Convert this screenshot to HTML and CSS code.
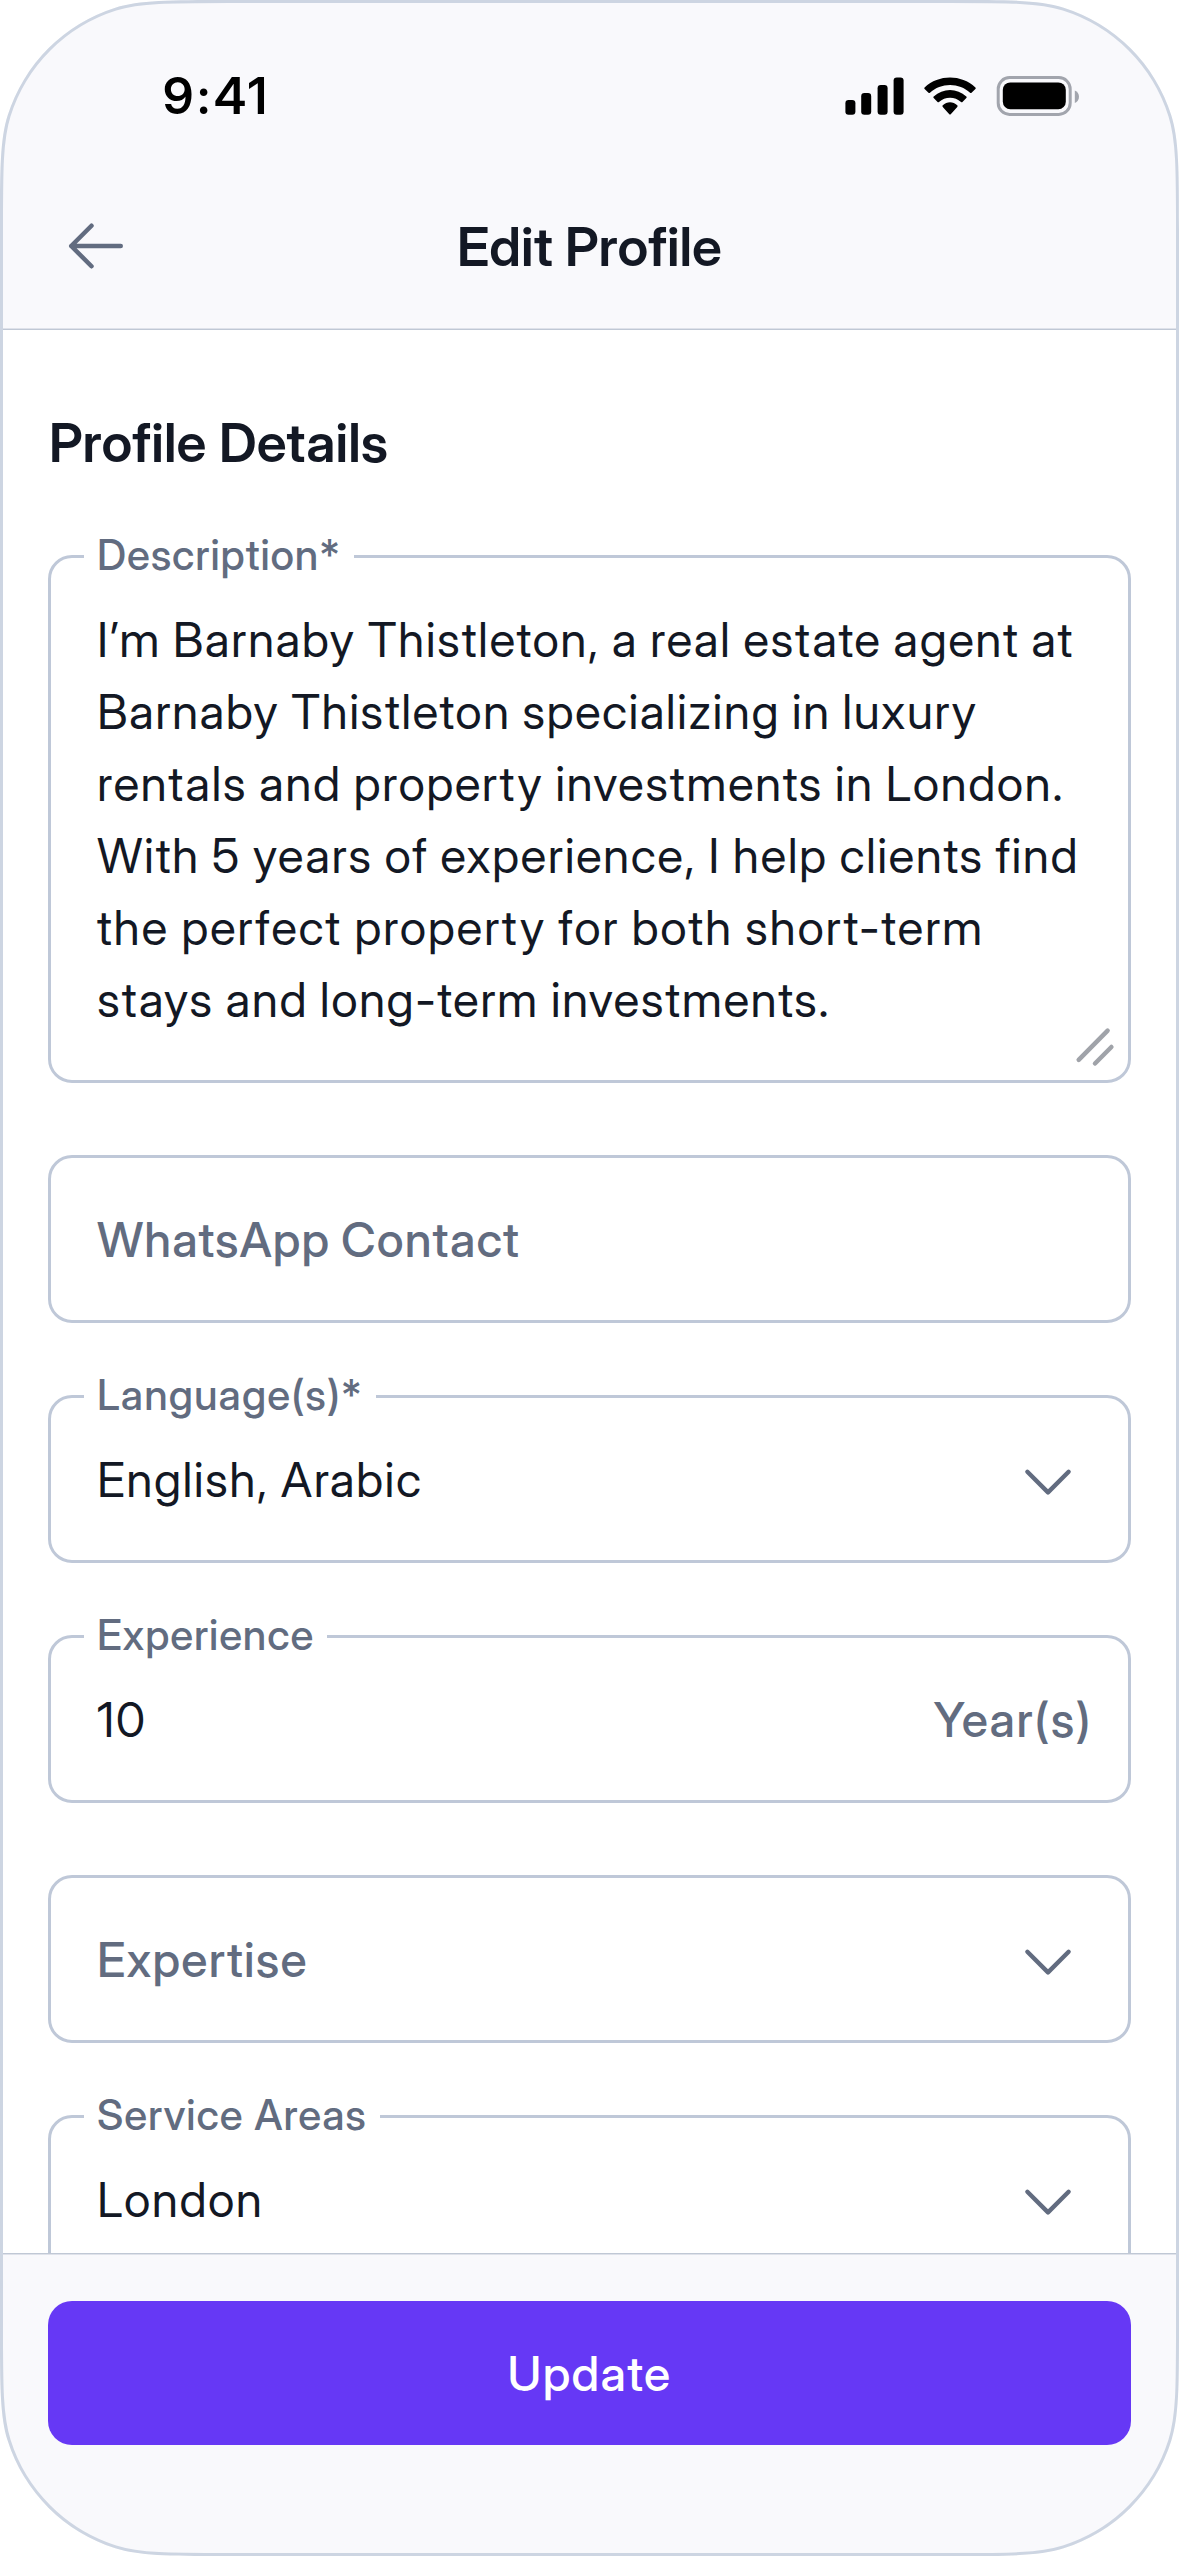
FILE: index.html
```html
<!DOCTYPE html>
<html lang="en">
<head>
<meta charset="utf-8">
<title>Edit Profile</title>
<link rel="stylesheet" href="styles.css">
</head>
<body>
<svg class="defs" width="0" height="0" aria-hidden="true">
  <symbol id="chevron" viewBox="0 0 256 256"><path d="M208 96l-80 80-80-80" fill="none" stroke="currentColor" stroke-width="17" stroke-linecap="round" stroke-linejoin="round"/></symbol>
</svg>
<div class="phone">
  <header class="header">
    <div class="status">
      <span class="time">9:41</span>
      <svg class="status-icons" width="236" height="42" viewBox="844 75 236 42" aria-hidden="true">
        <rect x="845.4" y="100" width="10" height="14.8" rx="3.2"/>
        <rect x="861.2" y="93" width="10" height="21.8" rx="3.2"/>
        <rect x="877.6" y="85" width="10" height="29.8" rx="3.2"/>
        <rect x="893.6" y="77.4" width="10" height="37.4" rx="3.2"/>
        <path transform="translate(924.3 77.6) scale(3)" d="M8.571 2.466C11.058 2.466 13.45 3.388 15.253 5.042C15.389 5.17 15.606 5.168 15.739 5.038L17.037 3.775C17.105 3.709 17.142 3.62 17.142 3.527C17.141 3.435 17.102 3.346 17.034 3.281C12.303 -1.094 4.839 -1.094 .108 3.281C.04 3.346 .001 3.435 0 3.527C-.001 3.62 .037 3.709 .105 3.775L1.403 5.038C1.536 5.168 1.753 5.17 1.889 5.042C3.692 3.388 6.084 2.466 8.571 2.466ZM8.568 6.687C9.925 6.686 11.234 7.198 12.24 8.122C12.376 8.253 12.591 8.251 12.723 8.116L14.011 6.797C14.078 6.728 14.116 6.634 14.115 6.536C14.114 6.439 14.075 6.346 14.005 6.278C10.942 3.387 6.197 3.387 3.133 6.278C3.064 6.346 3.024 6.439 3.023 6.536C3.023 6.634 3.06 6.728 3.128 6.797L4.415 8.116C4.548 8.251 4.762 8.253 4.898 8.122C5.904 7.199 7.212 6.687 8.568 6.687ZM11.092 9.48C11.094 9.585 11.057 9.687 10.99 9.761L8.813 12.216C8.749 12.288 8.662 12.328 8.572 12.328C8.481 12.328 8.394 12.288 8.33 12.216L6.153 9.761C6.086 9.687 6.049 9.585 6.051 9.48C6.053 9.375 6.094 9.275 6.164 9.204C7.554 7.891 9.589 7.891 10.98 9.204C11.05 9.275 11.09 9.375 11.092 9.48Z"/>
        <rect x="998.2" y="77.6" width="72" height="36.8" rx="11.4" fill="none" stroke="#a2a5ad" stroke-width="3"/>
        <rect x="1002.8" y="82.4" width="63" height="26.8" rx="7.5"/>
        <path d="M1074.8 90.6V103C1077.5 101.9 1079 99.5 1079 96.8C1079 94.1 1077.5 91.7 1074.8 90.6Z" fill="#a2a5ad"/>
      </svg>
    </div>
    <div class="nav">
      <svg class="back" viewBox="0 0 256 256" aria-label="Back"><path d="M216 128H40M112 56l-72 72 72 72" fill="none" stroke="currentColor" stroke-width="16" stroke-linecap="round" stroke-linejoin="round"/></svg>
      <h1 class="title">Edit Profile</h1>
    </div>
  </header>

  <main class="content">
    <h2 class="section-title">Profile Details</h2>
    <div class="fields">
      <div class="field field-area">
        <span class="label">Description*</span>
        <p class="value">I’m Barnaby Thistleton, a real estate agent at<br><span class="snug">Barnaby Thistleton specializing in luxury</span><br>rentals and property investments in London.<br>With 5 years of experience, I help clients find<br><span class="loose">the perfect property for both short-term</span><br>stays and long-term investments.</p>
        <svg class="grip" width="42" height="42" viewBox="1074 1026 42 42" aria-hidden="true"><path d="M1078.7 1059.8L1107.6 1030.6M1095 1063.5L1111.4 1047" fill="none" stroke="#a0a3a9" stroke-width="4.5" stroke-linecap="round"/></svg>
      </div>
      <div class="field"><span class="placeholder wide">WhatsApp Contact</span></div>
      <div class="field">
        <span class="label wide">Language(s)*</span>
        <span class="value">English, Arabic</span>
        <svg class="chevron" aria-hidden="true"><use href="#chevron"/></svg>
      </div>
      <div class="field">
        <span class="label">Experience</span>
        <span class="value">10</span>
        <span class="placeholder unit">Year(s)</span>
      </div>
      <div class="field">
        <span class="placeholder">Expertise</span>
        <svg class="chevron" aria-hidden="true"><use href="#chevron"/></svg>
      </div>
      <div class="field">
        <span class="label">Service Areas</span>
        <span class="value">London</span>
        <svg class="chevron" aria-hidden="true"><use href="#chevron"/></svg>
      </div>
    </div>
  </main>

  <footer class="footer">
    <button class="update" type="button">Update</button>
  </footer>

  <svg class="frame" viewBox="0 0 1179 2556" aria-hidden="true"><path d="M229.4 0H949.6c59.9 0 89.8 0 114.1 7.7a165 165 0 0 1 107.6 107.6c7.7 24.3 7.7 54.2 7.7 114.1V2326.6c0 59.9 0 89.8-7.7 114.1a165 165 0 0 1-107.6 107.6c-24.3 7.7-54.2 7.7-114.1 7.7H229.4c-59.9 0-89.8 0-114.1-7.7a165 165 0 0 1-107.6-107.6c-7.7-24.3-7.7-54.2-7.7-114.1V229.4c0-59.9 0-89.8 7.7-114.1a165 165 0 0 1 107.6-107.6c24.3-7.7 54.2-7.7 114.1-7.7Z" fill="none" stroke="#cdd5e2" stroke-width="6"/></svg>
</div>
</body>
</html>
```
FILE: styles.css
```css
* { box-sizing: border-box; margin: 0; }

body {
  background: #fff;
  color: #131824;
  font-family: "Inter Display", Inter, "Liberation Sans", sans-serif;
}

.defs { position: absolute; }

.phone {
  position: relative;
  display: flex;
  flex-direction: column;
  width: 1179px;
  height: 2556px;
  overflow: hidden;
  background: #fff;
  clip-path: path("M229.4 0H949.6c59.9 0 89.8 0 114.1 7.7a165 165 0 0 1 107.6 107.6c7.7 24.3 7.7 54.2 7.7 114.1V2326.6c0 59.9 0 89.8-7.7 114.1a165 165 0 0 1-107.6 107.6c-24.3 7.7-54.2 7.7-114.1 7.7H229.4c-59.9 0-89.8 0-114.1-7.7a165 165 0 0 1-107.6-107.6c-7.7-24.3-7.7-54.2-7.7-114.1V229.4c0-59.9 0-89.8 7.7-114.1a165 165 0 0 1 107.6-107.6c24.3-7.7 54.2-7.7 114.1-7.7Z");
}

.frame {
  position: absolute;
  inset: 0;
  width: 1179px;
  height: 2556px;
  pointer-events: none;
}

/* Header */
.header {
  flex: none;
  height: 330px;
  background: #f9f9fc;
  border-bottom: 1px solid #c0c8d5;
  box-shadow: inset 0 -1px #dfe2ea;
}

.status {
  display: flex;
  align-items: center;
  justify-content: space-between;
  height: 162px;
  padding: 30px 99px 0 163px;
}

.time {
  color: #000;
  font-size: 50px;
  font-weight: 600;
  line-height: 60px;
  letter-spacing: 4.4px;
}

.nav {
  display: grid;
  grid-template-columns: 72px 1fr 72px;
  align-items: center;
  height: 168px;
  padding: 0 60px;
}

.back { width: 72px; height: 72px; color: #626c80; }

.title, .section-title {
  font-size: 54px;
  font-weight: 600;
  line-height: 78px;
}

.title { text-align: center; padding-top: 2px; }

.section-title { padding-left: 1px; letter-spacing: 0.1px; }

/* Form */
.content {
  flex: 1;
  min-height: 0;
  overflow: hidden;
  padding: 74px 48px 0;
}

.fields {
  display: grid;
  grid-template-columns: minmax(0, 1fr);
  gap: 72px;
  padding-top: 73px;
}

.field {
  position: relative;
  display: flex;
  align-items: center;
  height: 168px;
  padding: 0 45px 0 46px;
  border: 3px solid #bfc8d8;
  border-radius: 24px;
}

.field-area { height: 528px; }

.label {
  position: absolute;
  top: -33px;
  left: 33px;
  padding: 0 13px;
  background: #fff;
  color: #626c80;
  font-size: 42px;
  font-weight: 500;
  line-height: 60px;
  letter-spacing: 0.85px;
  white-space: nowrap;
}

.label.wide { letter-spacing: 1.08px; }

.value, .placeholder {
  padding-top: 2px;
  font-size: 48px;
  line-height: 72px;
  letter-spacing: 1.42px;
  word-spacing: -1.5px;
  white-space: nowrap;
}

.snug { letter-spacing: 1.33px; }

.loose { letter-spacing: 1.68px; }

.placeholder { color: #626c80; font-weight: 500; letter-spacing: 1.2px; }

.placeholder.wide { letter-spacing: 1px; }

.placeholder.unit {
  margin-left: auto;
  margin-right: -9px;
  letter-spacing: 1.5px;
}

.chevron {
  width: 66px;
  height: 66px;
  margin: 1px 2px 0 auto;
  color: #626c80;
}

.grip { position: absolute; right: 12px; bottom: 12px; }

/* Footer */
.footer {
  flex: none;
  height: 303px;
  padding: 47px 48px 0;
  background: #f9f9fc;
  border-top: 1px solid #c0c8d5;
  box-shadow: inset 0 1px #dfe2ea;
}

.update {
  display: block;
  width: 100%;
  height: 144px;
  padding: 2px 0 0;
  border: 0;
  border-radius: 24px;
  background: #6638f5;
  color: #fff;
  font-family: inherit;
  font-size: 48px;
  font-weight: 500;
  line-height: 72px;
  letter-spacing: 1.3px;
}
```
